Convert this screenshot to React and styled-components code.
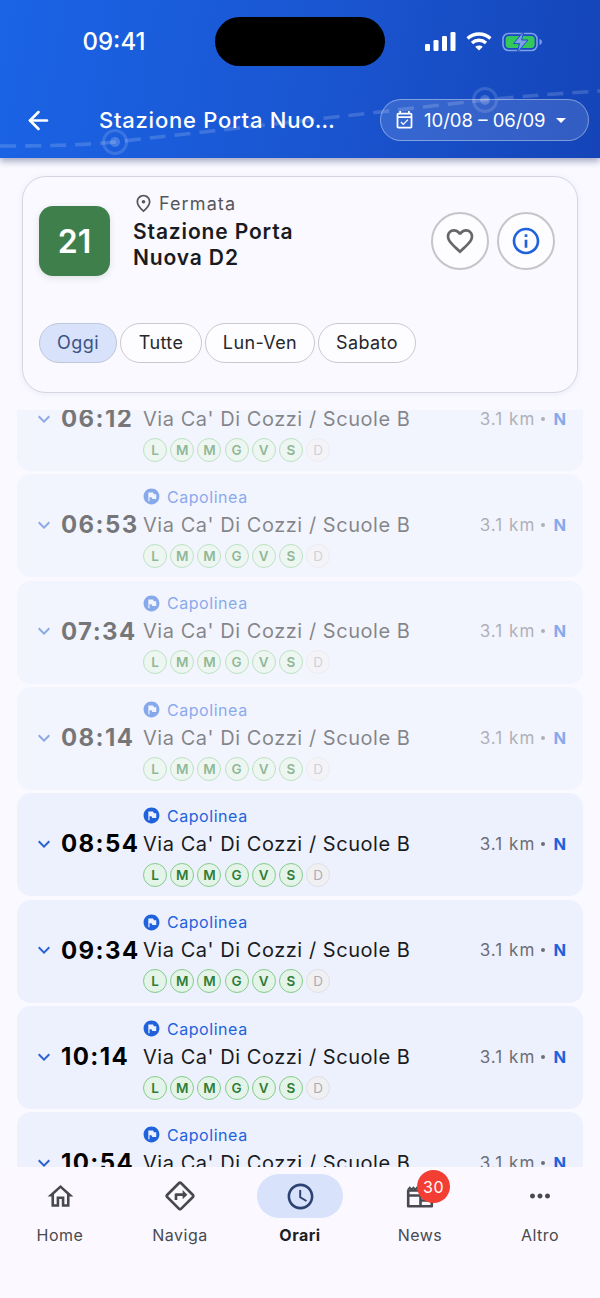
import React from "react";
import styled, { createGlobalStyle } from "styled-components";
import {
  MdArrowDropDown,
  MdFavoriteBorder,
  MdFlagCircle,
  MdInfoOutline,
  MdKeyboardArrowDown,
  MdMoreHoriz,
  MdOutlineDirections,
  MdOutlineEventAvailable,
  MdOutlineHome,
  MdOutlinePlace,
  MdOutlineSchedule
} from "react-icons/md";
import { ArrowLeft } from "lucide-react";

const GlobalStyle = createGlobalStyle`
  * {
    box-sizing: border-box;
  }

  body {
    margin: 0;
    background: #f9f9ff;
    font-family: Inter, "Noto Sans", sans-serif;
  }
`;

const Screen = styled.div`
  width: 600px;
  height: 1298px;
  display: flex;
  flex-direction: column;
  position: relative;
  overflow: hidden;
  background: #f9f9ff;
`;

const Header = styled.header`
  height: 158px;
  flex: none;
  position: relative;
  color: #fff;
  background: linear-gradient(100deg, #1a64e6 0%, #1a55d0 55%, #1444b8 100%);
  box-shadow: 0 3px 7px rgba(20, 30, 90, 0.4);
`;

const RouteArt = styled.svg`
  position: absolute;
  left: 0;
  top: 0;
`;

const StatusBar = styled.div`
  height: 99px;
  padding-top: 17px;
  display: grid;
  grid-template-columns: 215px 170px 1fr;
  align-items: start;
  position: relative;
`;

const Clock = styled.div`
  height: 49px;
  line-height: 49px;
  text-align: center;
  padding-left: 13px;
  font-size: 24px;
  font-weight: 500;
`;

const Island = styled.div`
  height: 49px;
  border-radius: 25px;
  background: #000;
`;

const StatusIcons = styled.div`
  height: 49px;
  padding-left: 40px;
  display: flex;
  align-items: center;
  gap: 10px;
`;

const AppBar = styled.div`
  height: 42px;
  display: flex;
  align-items: center;
  position: relative;
  padding: 0 11px 0 27px;
`;

const BackIcon = styled(ArrowLeft)`
  flex: none;
  margin-left: -3px;
`;

const Title = styled.h1`
  margin: 0 0 0 46px;
  flex: none;
  width: 240px;
  font-size: 22px;
  font-weight: 500;
  letter-spacing: 0.75px;
  white-space: nowrap;
  overflow: hidden;
  text-overflow: ellipsis;
`;

const DatePill = styled.div`
  margin-left: auto;
  width: 209px;
  height: 42px;
  border-radius: 21px;
  border: 1px solid rgba(255, 255, 255, 0.38);
  background: rgba(255, 255, 255, 0.13);
  display: flex;
  align-items: center;
  padding-left: 13px;
  font-size: 18.5px;
  white-space: nowrap;

  span {
    margin: 0 3px 0 9px;
  }
`;

const StopCard = styled.section`
  flex: none;
  height: 217px;
  margin: 18px 22px 17px;
  padding: 15px 22px 0 16px;
  border: 1px solid #d6d6e2;
  border-radius: 24px;
  background: #f9f9ff;
  box-shadow: 0 1px 6px rgba(70, 70, 130, 0.08);
`;

const StopHead = styled.div`
  height: 131px;
  display: flex;
  align-items: flex-start;
`;

const LineBadge = styled.div`
  flex: none;
  width: 71px;
  height: 70px;
  margin-top: 14px;
  border-radius: 14px;
  background: #3f7f4c;
  color: #fff;
  font-size: 32px;
  font-weight: 600;
  display: grid;
  place-items: center;
  box-shadow: 0 2px 6px rgba(60, 90, 70, 0.15);
`;

const StopInfo = styled.div`
  margin-left: 23px;
  flex: 1;
`;

const StopKind = styled.div`
  display: flex;
  align-items: center;
  height: 22px;
  color: #55565c;
  font-size: 18px;
  letter-spacing: 1.1px;

  svg {
    margin-right: 5px;
  }
`;

const StopName = styled.div`
  margin-top: 5px;
  color: #1a1b20;
  font-size: 21px;
  font-weight: 600;
  line-height: 26px;
  letter-spacing: 0.86px;
`;

const StopActions = styled.div`
  margin-top: 20px;
  display: flex;
  gap: 8px;
`;

const RoundButton = styled.div`
  width: 58px;
  height: 58px;
  border-radius: 50%;
  border: 2px solid #c5c5ca;
  background: #fdfcff;
  color: ${p => p.$color};
  display: grid;
  place-items: center;
`;

const Chips = styled.div`
  display: flex;
  gap: 3px;
`;

const Chip = styled.div`
  height: 40px;
  width: ${p => p.$width}px;
  border-radius: 20px;
  border: 1.5px solid ${p => (p.$active ? "#c0c6d8" : "#c9c9d0")};
  background: ${p => (p.$active ? "#d8e2fa" : "#fdfcff")};
  color: ${p => (p.$active ? "#3c5384" : "#26272c")};
  font-size: 18px;
  letter-spacing: 0.4px;
  padding-bottom: 1px;
  display: grid;
  place-items: center;
`;

const Departures = styled.div`
  flex: 1;
  min-height: 0;
  margin: 0 17px;
  overflow: hidden;
`;

const DepartureStack = styled.div`
  margin-top: -42px;
  display: flex;
  flex-direction: column;
  gap: 3.35px;
`;

const Row = styled.div`
  flex: none;
  height: 103px;
  padding: 11.5px 17px 0 15px;
  border-radius: 14px;
  background: #edf1fe;
  opacity: ${p => (p.$past ? 0.52 : 1)};
  display: grid;
  grid-template-columns: 29px 82px 1fr auto;
  grid-template-rows: 22px 34px 26px;
  align-items: center;
`;

const Terminus = styled.div`
  grid-column: 3 / 5;
  grid-row: 1;
  display: flex;
  align-items: center;
  color: #1f62dc;
  font-size: 16px;
  letter-spacing: 0.55px;

  svg {
    margin: 0 6px 0 -1px;
  }
`;

const Chevron = styled(MdKeyboardArrowDown)`
  grid-column: 1;
  grid-row: 2;
  color: #2a62d0;
`;

const Time = styled.div`
  grid-column: 2;
  grid-row: 2;
  color: #000;
  font-size: 24px;
  font-weight: 700;
  letter-spacing: 1.4px;
  white-space: nowrap;
`;

const Destination = styled.div`
  grid-column: 3;
  grid-row: 2;
  color: #1a1b20;
  font-size: 20px;
  letter-spacing: 0.54px;
  white-space: nowrap;
`;

const Distance = styled.div`
  grid-column: 4;
  grid-row: 2;
  color: #6d6e75;
  font-size: 17px;
  letter-spacing: 1.05px;
  white-space: nowrap;
  display: flex;
  align-items: center;

  b {
    margin-left: 8px;
    color: #1f62dc;
    font-size: 16.5px;
    font-weight: 700;
    letter-spacing: 0;
  }

  i {
    margin-left: 6px;
    width: 4px;
    height: 4px;
    border-radius: 50%;
    background: #6d6e75;
  }
`;

const Days = styled.div`
  grid-column: 3 / 5;
  grid-row: 3;
  align-self: end;
  display: flex;
  gap: 3.2px;
`;

const Day = styled.div`
  width: 24px;
  height: 24px;
  border-radius: 50%;
  border: 1.3px solid ${p => (p.$on ? "#84cc8b" : "#dfdfe3")};
  background: ${p => (p.$on ? "#e4f4e8" : "#f0f0f3")};
  color: ${p => (p.$on ? "#2f7d38" : "#adadb3")};
  font-size: 13.5px;
  font-weight: ${p => (p.$on ? 600 : 400)};
  display: grid;
  place-items: center;
`;

const BottomNav = styled.nav`
  flex: none;
  height: 131px;
  background: #fbf9ff;
  display: grid;
  grid-template-columns: repeat(5, 1fr);
  align-items: start;
  padding-top: 7px;
`;

const NavItem = styled.div`
  display: flex;
  flex-direction: column;
  align-items: center;
  color: ${p => (p.$active ? "#1d1e24" : "#48494f")};
  font-size: 16px;
  font-weight: ${p => (p.$active ? 700 : 400)};
  letter-spacing: 0.5px;
`;

const NavIcon = styled.div`
  width: 86px;
  height: 44px;
  border-radius: 22px;
  background: ${p => (p.$active ? "#d8e2fa" : "transparent")};
  color: ${p => (p.$active ? "#2b4272" : "#48494f")};
  display: grid;
  place-items: center;
  position: relative;
  margin-bottom: 7px;
`;

const CountBadge = styled.div`
  position: absolute;
  left: 40px;
  top: -4px;
  width: 33px;
  height: 33px;
  border-radius: 50%;
  background: #f33e33;
  color: #fff;
  font-size: 16px;
  font-weight: 400;
  display: grid;
  place-items: center;
`;

const SignalIcon = () => (
  <svg width="31" height="19" viewBox="0 0 31 19" fill="#fff">
    <rect x="0" y="12" width="5" height="7" rx="1.2" />
    <rect x="8.5" y="8" width="5" height="11" rx="1.2" />
    <rect x="17" y="4" width="5" height="15" rx="1.2" />
    <rect x="25.5" y="0" width="5" height="19" rx="1.2" />
  </svg>
);

const WifiIcon = () => (
  <svg width="26" height="19" viewBox="0 0 26 19" fill="none" stroke="#fff" strokeWidth="3.4">
    <path d="M1.6 6.4C8 .6 18 .6 24.4 6.4" />
    <path d="M6 11C10 7.4 16 7.4 20 11" />
    <path d="M13 18.6 9.2 14.8C11.4 13 14.6 13 16.8 14.8Z" fill="#fff" stroke="none" />
  </svg>
);

const BatteryIcon = () => (
  <svg width="41" height="22" viewBox="0 0 41 22">
    <rect x="1" y="2.5" width="34" height="17" rx="5.5" fill="none" stroke="#7f9fe8" strokeWidth="1.6" />
    <rect x="3.6" y="5" width="29" height="12" rx="3.4" fill="#34c759" />
    <path d="M37.5 8v6c1.6-.4 2.4-1.6 2.4-3s-.8-2.6-2.4-3Z" fill="#7f9fe8" />
    <path d="M22 0 11.5 12.6h6L15 22l11-13h-6.4Z" fill="#7f9fe8" stroke="#1a50c8" strokeWidth="1" />
  </svg>
);

const NewsIcon = () => (
  <svg width="28" height="28" viewBox="0 0 28 28" fill="none" stroke="currentColor" strokeWidth="2.6">
    <path d="M2 7.5 3.8 5.5 5.6 7.5 7.4 5.5 9.2 7.5 11 5.5 12.8 7.5 14.6 5.5 V9" strokeWidth="1.8" />
    <path d="M2.2 8.5H25.8V24.3H2.2Z" strokeLinejoin="round" />
    <path d="M2.2 13.5H14.5M14.5 8.5V24.3M14.5 18.5H25.8" />
  </svg>
);

const days = ["L", "M", "M", "G", "V", "S", "D"];
const departures = [
  { time: "06:12", past: true },
  { time: "06:53", past: true },
  { time: "07:34", past: true },
  { time: "08:14", past: true },
  { time: "08:54" },
  { time: "09:34" },
  { time: "10:14" },
  { time: "10:54" }
];
const chips = [
  { label: "Oggi", width: 78, active: true },
  { label: "Tutte", width: 82 },
  { label: "Lun-Ven", width: 110 },
  { label: "Sabato", width: 98 }
];

const App = () => {
  return (
    <Screen>
      <GlobalStyle />
      <Header>
        <RouteArt width="600" height="158" viewBox="0 0 600 158" fill="none">
          <path
            d="M0 146C40 146 80 145.5 115 142L485 100C525 96 565 93 600 91"
            stroke="#fff"
            strokeOpacity="0.16"
            strokeWidth="3.6"
            strokeDasharray="16 9"
          />
          <circle cx="115" cy="142" r="11.5" stroke="#fff" strokeOpacity="0.14" strokeWidth="3" />
          <circle cx="115" cy="142" r="5" fill="#fff" fillOpacity="0.2" />
          <circle cx="485" cy="100" r="11.5" stroke="#fff" strokeOpacity="0.14" strokeWidth="3" />
          <circle cx="485" cy="100" r="5" fill="#fff" fillOpacity="0.2" />
        </RouteArt>
        <StatusBar>
          <Clock>09:41</Clock>
          <Island />
          <StatusIcons>
            <SignalIcon />
            <WifiIcon />
            <BatteryIcon />
          </StatusIcons>
        </StatusBar>
        <AppBar>
          <BackIcon size={29} strokeWidth={2.2} />
          <Title>Stazione Porta Nuova D2</Title>
          <DatePill>
            <MdOutlineEventAvailable size={21} />
            <span>10/08 – 06/09</span>
            <MdArrowDropDown size={24} />
          </DatePill>
        </AppBar>
      </Header>

      <StopCard>
        <StopHead>
          <LineBadge>21</LineBadge>
          <StopInfo>
            <StopKind>
              <MdOutlinePlace size={21} />
              Fermata
            </StopKind>
            <StopName>
              Stazione Porta
              <br />
              Nuova D2
            </StopName>
          </StopInfo>
          <StopActions>
            <RoundButton $color="#66666a">
              <MdFavoriteBorder size={32} />
            </RoundButton>
            <RoundButton $color="#1f62dc">
              <MdInfoOutline size={32} />
            </RoundButton>
          </StopActions>
        </StopHead>
        <Chips>
          {chips.map(chip => (
            <Chip key={chip.label} $width={chip.width} $active={chip.active}>
              {chip.label}
            </Chip>
          ))}
        </Chips>
      </StopCard>

      <Departures>
        <DepartureStack>
          {departures.map(item => (
            <Row key={item.time} $past={item.past}>
              <Terminus>
                <MdFlagCircle size={19} />
                Capolinea
              </Terminus>
              <Chevron size={24} />
              <Time>{item.time}</Time>
              <Destination>Via Ca' Di Cozzi / Scuole B</Destination>
              <Distance>
                3.1 km
                <i />
                <b>N</b>
              </Distance>
              <Days>
                {days.map((day, idx) => (
                  <Day key={`day-${idx}`} $on={day !== "D"}>
                    {day}
                  </Day>
                ))}
              </Days>
            </Row>
          ))}
        </DepartureStack>
      </Departures>

      <BottomNav>
        <NavItem>
          <NavIcon>
            <MdOutlineHome size={31} />
          </NavIcon>
          Home
        </NavItem>
        <NavItem>
          <NavIcon>
            <MdOutlineDirections size={32} />
          </NavIcon>
          Naviga
        </NavItem>
        <NavItem $active>
          <NavIcon $active>
            <MdOutlineSchedule size={31} />
          </NavIcon>
          Orari
        </NavItem>
        <NavItem>
          <NavIcon>
            <NewsIcon />
            <CountBadge>30</CountBadge>
          </NavIcon>
          News
        </NavItem>
        <NavItem>
          <NavIcon>
            <MdMoreHoriz size={30} />
          </NavIcon>
          Altro
        </NavItem>
      </BottomNav>
    </Screen>
  );
};

export default App;
